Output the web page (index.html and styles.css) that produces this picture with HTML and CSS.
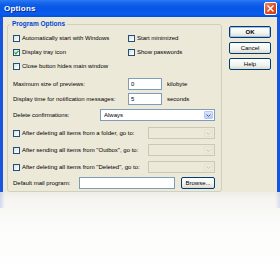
FILE: index.html
```html
<!DOCTYPE html>
<html>
<head>
<meta charset="utf-8">
<link rel="stylesheet" href="styles.css">
</head>
<body>
<div class="screen">
  <div class="window">
    <div class="titlebar">
      <span class="title">Options</span>
      <span class="close"><svg width="7" height="7" viewBox="0 0 7 7"><path d="M1 1L6 6M6 1L1 6" stroke="#fff" stroke-width="1.4" stroke-linecap="square"/></svg></span>
    </div>
    <div class="client">
      <fieldset class="group">
        <legend>Program Options</legend>
        <div class="checks">
          <div class="chk"><span class="box"></span>Automatically start with Windows</div>
          <div class="chk"><span class="box"></span>Start minimized</div>
          <div class="chk"><span class="box"><svg width="5" height="5" viewBox="0 0 5 5"><path d="M0.6 2.4L1.9 3.8L4.4 0.9" fill="none" stroke="#21a121" stroke-width="1.2"/></svg></span>Display tray icon</div>
          <div class="chk"><span class="box"></span>Show passwords</div>
          <div class="chk"><span class="box"></span>Close button hides main window</div>
        </div>
        <div class="field f1">
          <span class="lbl lbl-wide">Maximum size of previews:</span>
          <input class="txt num" value="0">
          <span class="unit">kilobyte</span>
        </div>
        <div class="field f2">
          <span class="lbl lbl-wide">Display time for notification messages:</span>
          <input class="txt num" value="5">
          <span class="unit">seconds</span>
        </div>
        <div class="field f3">
          <span class="lbl lbl-mid">Delete confirmations:</span>
          <div class="combo combo-wide"><span class="val">Always</span><span class="arrow"><svg width="5" height="3" viewBox="0 0 5 3"><path d="M0.5 0.5L2.5 2.5L4.5 0.5" fill="none" stroke="#4d6185" stroke-width="1"/></svg></span></div>
        </div>
        <div class="field after a1">
          <div class="chk lbl-after"><span class="box"></span>After deleting all items from a folder, go to:</div>
          <div class="combo combo-off"><span class="val"></span><span class="arrow"><svg width="5" height="3" viewBox="0 0 5 3"><path d="M0.5 0.5L2.5 2.5L4.5 0.5" fill="none" stroke="#c9c7ba" stroke-width="1"/></svg></span></div>
        </div>
        <div class="field after a2">
          <div class="chk lbl-after"><span class="box"></span>After sending all items from "Outbox", go to:</div>
          <div class="combo combo-off"><span class="val"></span><span class="arrow"><svg width="5" height="3" viewBox="0 0 5 3"><path d="M0.5 0.5L2.5 2.5L4.5 0.5" fill="none" stroke="#c9c7ba" stroke-width="1"/></svg></span></div>
        </div>
        <div class="field after a3">
          <div class="chk lbl-after"><span class="box"></span>After deleting all items from "Deleted", go to:</div>
          <div class="combo combo-off"><span class="val"></span><span class="arrow"><svg width="5" height="3" viewBox="0 0 5 3"><path d="M0.5 0.5L2.5 2.5L4.5 0.5" fill="none" stroke="#c9c7ba" stroke-width="1"/></svg></span></div>
        </div>
        <div class="field mail">
          <span class="lbl lbl-mail">Default mail program:</span>
          <input class="txt mailtxt" value="">
          <span class="btn browse">Browse...</span>
        </div>
      </fieldset>
      <div class="buttons">
        <span class="btn default">OK</span>
        <span class="btn">Cancel</span>
        <span class="btn">Help</span>
      </div>
    </div>
  </div>
  <div class="reflection"><div class="refl-top"></div></div>
</div>
</body>
</html>
```
FILE: styles.css
```css
* { box-sizing: border-box; }
html, body { margin: 0; padding: 0; }
body {
  width: 280px;
  height: 270px;
  overflow: hidden;
  background: #fff;
  font-family: "Liberation Sans", Arial, sans-serif;
  font-size: 6px;
  color: #000;
}
.screen { display: flex; flex-direction: column; height: 270px; }
.window { height: 192px; display: flex; flex-direction: column; flex: none; }
.titlebar {
  height: 17px;
  flex: none;
  display: flex;
  align-items: center;
  justify-content: space-between;
  padding: 0 3px 0 4px;
  background: linear-gradient(#2d7bf5 0%, #1a68ec 15%, #0b5ae6 35%, #0656e8 60%, #0a5cf0 80%, #0450d8 100%);
}
.title {
  color: #fff;
  font-weight: bold;
  font-size: 8px;
  letter-spacing: 0.2px;
  text-shadow: 1px 1px 0 #0a2a8a;
}
.close {
  width: 13px;
  height: 13px;
  border: 1px solid #fff;
  border-radius: 2px;
  background: linear-gradient(135deg, #f08a6a 0%, #e2542c 45%, #c93d12 100%);
  display: flex;
  align-items: center;
  justify-content: center;
}
.close svg { display: block; }
.client {
  flex: 1;
  display: flex;
  align-items: flex-start;
  background: #ece9d8;
  border-left: 3px solid #1856e2;
  border-right: 3px solid #1856e2;
  padding-left: 4px;
  overflow: hidden;
}
.group {
  flex: none;
  width: 215px;
  margin: 3px 0 0 0;
  padding: 3px 6px 2px 5px;
  border: 1px solid #d0d0bf;
  border-radius: 3px;
  min-width: 0;
}
.group legend {
  font-weight: bold;
  font-size: 6.5px;
  line-height: 8px;
  color: #0046d5;
  padding: 0 2px;
  margin-left: -3px;
}
.checks {
  display: grid;
  grid-template-columns: 115px auto;
  grid-auto-rows: 14px;
}
.chk {
  display: flex;
  align-items: center;
  gap: 2px;
  white-space: nowrap;
}
.box {
  flex: none;
  width: 7px;
  height: 7px;
  border: 1px solid #1c5180;
  background: linear-gradient(135deg, #dcdcd7 0%, #f4f4f0 60%, #ffffff 100%);
  display: flex;
  align-items: center;
  justify-content: center;
}
.box svg { display: block; }
.field {
  display: flex;
  align-items: center;
  height: 12px;
  white-space: nowrap;
}
.f1 { margin-top: 5px; }
.f2 { margin-top: 3px; }
.f3 { margin-top: 4px; }
.a1 { margin-top: 6px; }
.a2 { margin-top: 5px; }
.a3 { margin-top: 5px; }
.mail { margin-top: 4px; }
.lbl-wide { width: 115px; flex: none; }
.lbl-mid { width: 87px; flex: none; }
.lbl-after { width: 135px; flex: none; }
.lbl-mail { width: 66px; flex: none; }
.txt {
  height: 12px;
  border: 1px solid #7f9db9;
  background: #fff;
  font-family: inherit;
  font-size: 6px;
  padding: 0 2px;
  margin: 0;
  outline: none;
  color: #000;
}
.num { width: 34px; }
.unit { margin-left: 5px; }
.mailtxt { width: 96px; }
.combo {
  height: 12px;
  display: flex;
  align-items: stretch;
  border: 1px solid #7f9db9;
  background: #fff;
  padding: 1px;
}
.combo .val { flex: 1; padding-left: 2px; display: flex; align-items: center; }
.combo .arrow {
  width: 9px;
  flex: none;
  display: flex;
  align-items: center;
  justify-content: center;
  background: linear-gradient(#dbe6fd, #b9cdf9);
  border: 1px solid #b4c8f6;
  border-radius: 1px;
}
.combo-wide { width: 115px; }
.combo-off {
  width: 67px;
  border-color: #cbc8b9;
  background: #ece9d8;
}
.combo-off .arrow {
  background: #ece9d8;
  border-color: #e4e2d6;
}
.btn {
  height: 12px;
  display: flex;
  align-items: center;
  justify-content: center;
  border: 1px solid #003c74;
  border-radius: 2px;
  background: linear-gradient(#ffffff 0%, #f3f3ee 60%, #dcdad0 100%);
  font-size: 6px;
  white-space: nowrap;
}
.browse { width: 34px; margin-left: 6px; flex: none; }
.buttons {
  flex: none;
  width: 42px;
  margin: 9px 0 0 7px;
  display: flex;
  flex-direction: column;
  gap: 4px;
}
.default {
  font-weight: bold;
  box-shadow: inset 0 0 0 1px #a5bdee;
}
.reflection {
  flex: 1;
  background: linear-gradient(#eeede6 0px, #f6f5f1 8px, #fbfbf9 30px, #ffffff 78px);
}
.refl-top {
  height: 16px;
  background: linear-gradient(to right, rgba(70,110,225,0.22) 0px, rgba(70,110,225,0) 5px, rgba(70,110,225,0) 275px, rgba(70,110,225,0.18) 280px);
}
```
